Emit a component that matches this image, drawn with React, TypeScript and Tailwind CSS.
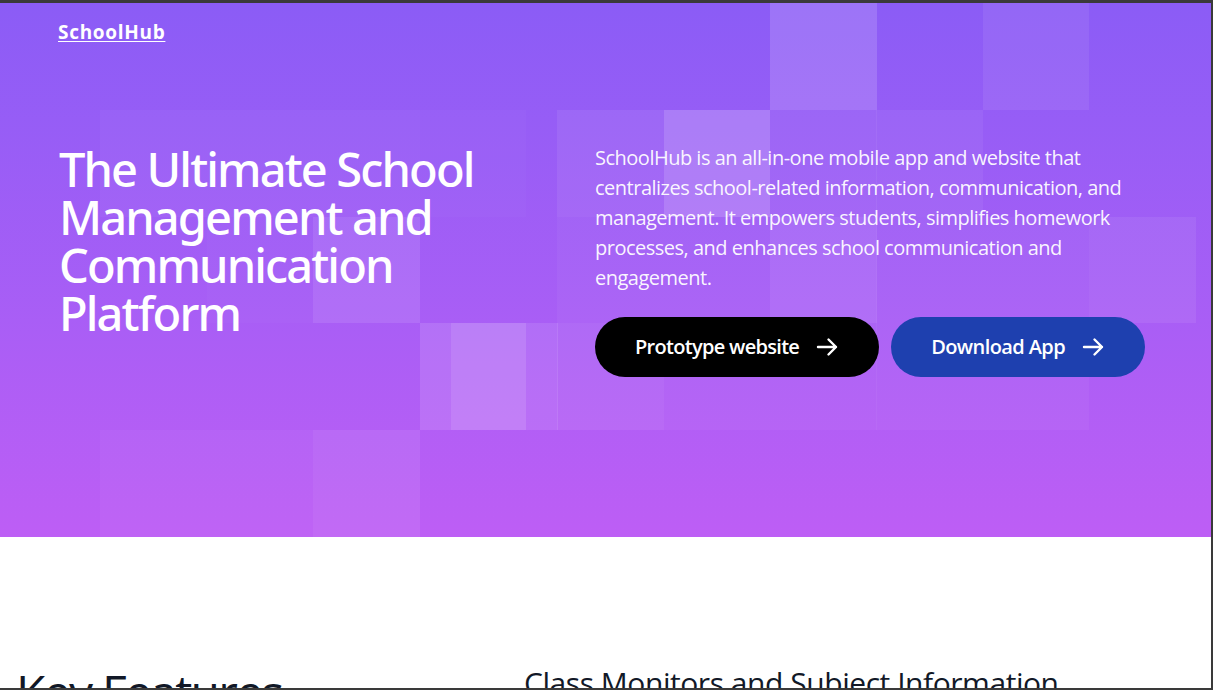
import React from "react";

const squares: { x: number; r: number; o: number }[] = [
  { x: 770, r: 0, o: 0.15 },
  { x: 982.5, r: 0, o: 0.07 },
  { x: 100, r: 1, o: 0.03 },
  { x: 206.5, r: 1, o: 0.03 },
  { x: 313, r: 1, o: 0.03 },
  { x: 419.5, r: 1, o: 0.02 },
  { x: 557, r: 1, o: 0.07 },
  { x: 663.5, r: 1, o: 0.2 },
  { x: 770, r: 1, o: 0.06 },
  { x: 876, r: 1, o: 0.05 },
  { x: 206.5, r: 2, o: 0.02 },
  { x: 313, r: 2, o: 0.1 },
  { x: 557, r: 2, o: 0.04 },
  { x: 663.5, r: 2, o: 0.04 },
  { x: 770, r: 2, o: 0.1 },
  { x: 876, r: 2, o: 0.04 },
  { x: 982.5, r: 2, o: 0.04 },
  { x: 1089, r: 2, o: 0.07 },
  { x: 419.5, r: 3, o: 0.12 },
  { x: 451, r: 3, o: 0.1 },
  { x: 557, r: 3, o: 0.08 },
  { x: 663.5, r: 3, o: 0.04 },
  { x: 770, r: 3, o: 0.04 },
  { x: 876, r: 3, o: 0.04 },
  { x: 982.5, r: 3, o: 0.04 },
  { x: 100, r: 4, o: 0.03 },
  { x: 206.5, r: 4, o: 0.03 },
  { x: 313, r: 4, o: 0.08 },
];

function Arrow() {
  return (
    <svg
      width="24"
      height="24"
      viewBox="0 0 24 24"
      fill="none"
      stroke="currentColor"
      strokeWidth={2.4}
      strokeLinecap="round"
      strokeLinejoin="round"
    >
      <path d="M13.5 4.5 21 12m0 0-7.5 7.5M21 12H3" />
    </svg>
  );
}

export default function App() {
  return (
    <div
      className="w-[1213px] h-[690px] overflow-hidden border-t-[3px] border-r-2 border-b-2 border-[#3a3a3a] bg-white"
      style={{ fontFamily: '"Open Sans", "Noto Sans", sans-serif' }}
    >
      <section className="relative h-[534px] overflow-hidden bg-gradient-to-b from-[#8b5cf6] to-[#bd5ef5]">
        <div className="absolute inset-0">
          {squares.map((s, i) => (
            <div
              key={i}
              className="absolute w-[106.5px] h-[106.8px] bg-white"
              style={{ left: s.x, top: s.r * 106.8, opacity: s.o }}
            />
          ))}
        </div>
        <div className="relative">
          <nav className="px-[58px] pt-[15px]">
            <a className="text-[19px] leading-7 font-bold tracking-[0.7px] text-white underline underline-offset-2">
              SchoolHub
            </a>
          </nav>
          <div className="mt-[97px] grid grid-cols-[536px_1fr] pl-[59px] pr-[59px]">
            <h1
              className="pt-[2px] text-[47px] leading-[48px] font-medium tracking-[-0.04em] text-white"
              style={{ fontFamily: '"Noto Sans", "Open Sans", sans-serif' }}
            >
              The Ultimate School
              <br />
              Management and
              <br />
              Communication
              <br />
              Platform
            </h1>
            <div className="flex flex-col">
              <p className="text-xl leading-[30px] tracking-[-0.025em] text-white/95 whitespace-nowrap">
                SchoolHub is an all-in-one mobile app and website that
                <br />
                centralizes school-related information, communication, and
                <br />
                management. It empowers students, simplifies homework
                <br />
                processes, and enhances school communication and
                <br />
                engagement.
              </p>
              <div className="mt-6 flex gap-3">
                <button className="flex h-[60px] items-center gap-4 rounded-full bg-black px-10 text-xl font-semibold tracking-[-0.035em] text-white">
                  Prototype website
                  <Arrow />
                </button>
                <button className="flex h-[60px] items-center gap-4 rounded-full bg-[#1e40af] px-10 text-xl font-semibold tracking-[-0.03em] text-white">
                  Download App
                  <Arrow />
                </button>
              </div>
            </div>
          </div>
        </div>
      </section>
      <section className="grid grid-cols-[508px_1fr] px-4 pt-[128px]">
        <h2 className="mt-[3px] text-5xl leading-[48px] font-normal tracking-[-0.036em] text-[#111827]">
          Key Features
        </h2>
        <h3 className="text-3xl leading-9 font-normal tracking-[-0.015em] text-[#111827]">
          Class Monitors and Subject Information
        </h3>
      </section>
    </div>
  );
}
